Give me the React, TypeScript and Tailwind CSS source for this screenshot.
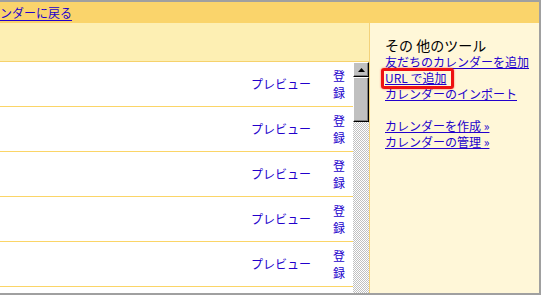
const rows = [0, 1, 2, 3, 4];

export default function App() {
  return (
    <div className="flex h-[295px] w-[541px] flex-col overflow-hidden border-y-2 border-r-2 border-[#a0a0a0] bg-white font-['Noto_Sans_CJK_JP','Liberation_Sans',sans-serif] text-[12px]">
      <div className="flex h-[21px] shrink-0 items-center bg-[#fad46b]">
        <a className="leading-[14px] text-[#2200cc] underline underline-offset-[2px]">ンダーに戻る</a>
      </div>

      <div className="flex min-h-0 flex-1">
        <div className="flex w-[369px] shrink-0 flex-col">
          <div className="h-[39px] shrink-0 border-b border-[#f6d26c] bg-[#fdefb3]" />
          <div className="flex min-h-0 flex-1">
            <div className="flex-1 overflow-hidden">
              {rows.map((i) => (
                <CalendarRow key={i} />
              ))}
            </div>
            <Scrollbar />
          </div>
        </div>

        <aside className="flex-1 border-l border-[#f3d27a] bg-[#fff7d8] pl-[15px] pt-[14px] leading-[16px]">
          <p className="h-[17px] text-[14px] leading-[17px] text-black">その 他のツール</p>
          <ul className="text-[12px] text-[#2200cc]">
            <li><a className="underline">友だちのカレンダーを追加</a></li>
            <li>
              <span className="relative inline-block">
                <a className="underline">URL で追加</a>
                <span className="absolute -left-[4px] -right-[8px] -top-[2px] -bottom-[3px] rounded-[3px] border-[3px] border-[#ee1111] shadow-[0_0_2px_rgba(220,0,0,0.6)]" />
              </span>
            </li>
            <li><a className="underline">カレンダーのインポート</a></li>
            <li className="h-[16px]" />
            <li><a className="underline">カレンダーを作成 »</a></li>
            <li><a className="underline">カレンダーの管理 »</a></li>
          </ul>
        </aside>
      </div>
    </div>
  );
}

function CalendarRow() {
  return (
    <div className="flex h-[45px] items-center justify-end border-b border-[#fbd567] pr-[6px] text-[#2200cc]">
      <span className="mr-[22px]">プレビュー</span>
      <span className="w-[14px] leading-[17px]">登録</span>
    </div>
  );
}

function Scrollbar() {
  return (
    <div className="flex w-[16px] shrink-0 flex-col bg-[repeating-conic-gradient(#c0c0c0_0_25%,#ffffff_0_50%)] bg-[length:2px_2px]">
      <div className="flex h-[15px] shrink-0 items-center justify-center border-t border-l border-[#ffffff] border-r border-b border-r-black border-b-black bg-[#c0c0c0] shadow-[inset_-1px_-1px_0_#808080]">
        <svg width="7" height="4" viewBox="0 0 7 4">
          <path d="M3.5 0 L7 4 L0 4 Z" fill="#000" />
        </svg>
      </div>
      <div className="h-[45px] shrink-0 border-t border-l border-[#ffffff] border-r border-b border-r-black border-b-black bg-[#c0c0c0] shadow-[inset_-1px_-1px_0_#808080]" />
    </div>
  );
}
